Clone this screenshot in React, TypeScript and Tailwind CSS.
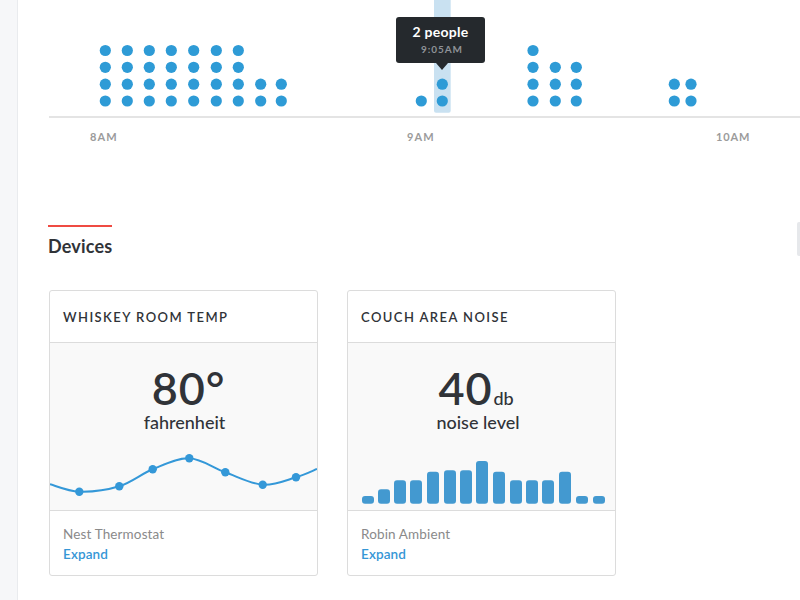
import React from "react";

type P = [number, number];

function smoothPath(pts: P[]): string {
  let d = `M${pts[0][0]},${pts[0][1]}`;
  for (let i = 0; i < pts.length - 1; i++) {
    const p0 = pts[i - 1] || pts[i];
    const p1 = pts[i];
    const p2 = pts[i + 1];
    const p3 = pts[i + 2] || p2;
    const c1: P = [p1[0] + (p2[0] - p0[0]) / 6, p1[1] + (p2[1] - p0[1]) / 6];
    const c2: P = [p2[0] - (p3[0] - p1[0]) / 6, p2[1] - (p3[1] - p1[1]) / 6];
    d += ` C${c1[0]},${c1[1]} ${c2[0]},${c2[1]} ${p2[0]},${p2[1]}`;
  }
  return d;
}

const ROWS = [101, 84.2, 67.3, 50.5];
const COLS: [number, number][] = [
  [57.3, 4], [79.3, 4], [101.3, 4], [123.3, 4], [145.7, 4], [168.3, 4], [190.3, 4], [212.7, 2], [233.3, 2],
  [373.3, 1], [394.3, 2], [485, 4], [507.3, 3], [528.3, 3], [626.3, 2], [643, 2],
];

const FONT = { fontFamily: "Lato, 'Open Sans', sans-serif" };

function DotChart() {
  return (
    <div className="relative ml-[30px] h-[160px] w-[752px]">
      <svg className="absolute left-0 top-0" width={752} height={160}>
        <rect x={386} y={-4} width={16.7} height={116.7} rx={2} fill="#c9e1f1" />
        <rect x={1} y={116} width={751} height={2} fill="#e4e4e4" />
        {COLS.map(([x, n], ci) =>
          ROWS.slice(0, n).map((y, ri) => (
            <circle key={`${ci}-${ri}`} cx={x} cy={y} r={5.6} fill="#2e9bd6" />
          ))
        )}
      </svg>
      <div className="absolute left-[348px] top-[17px] flex h-[46px] w-[89px] flex-col items-center rounded-[3px] bg-[#25292d] pt-[7px]">
        <span className="text-[14px] font-bold leading-[16px] tracking-[0.02em] text-white">2 people</span>
        <span className="mt-[3px] pl-[3px] text-[10px] font-bold leading-[12px] tracking-[0.09em] text-[#8e9297]">9:05AM</span>
        <div className="absolute left-[40px] top-[46px] h-0 w-0 border-l-[6px] border-r-[6px] border-t-[7px] border-l-transparent border-r-transparent border-t-[#25292d]" />
      </div>
      <span className="absolute left-[42px] top-[130px] text-[11px] font-bold leading-[13px] tracking-[0.1em] text-[#9b9b9b]">8AM</span>
      <span className="absolute left-[359px] top-[130px] text-[11px] font-bold leading-[13px] tracking-[0.1em] text-[#9b9b9b]">9AM</span>
      <span className="absolute left-[668px] top-[130px] text-[11px] font-bold leading-[13px] tracking-[0.08em] text-[#9b9b9b]">10AM</span>
    </div>
  );
}

const WAVE: P[] = [
  [0, 34.3], [29.3, 41.7], [69.3, 36.3], [102.7, 19.3], [139.3, 8.3], [175.3, 22.3], [212.7, 34.7], [246, 27.3], [267, 19],
];

function Wave() {
  return (
    <svg width={267} height={60} className="mt-auto block">
      <path d={smoothPath(WAVE)} fill="none" stroke="#3498d8" strokeWidth={2} />
      {WAVE.slice(1, -1).map(([x, y], i) => (
        <circle key={i} cx={x} cy={y} r={4.2} fill="#3498d8" />
      ))}
    </svg>
  );
}

const BARS: [number, number][] = [
  [14, 46], [30, 39.3], [46, 30.3], [62, 30.3], [79, 21.7], [96, 20.3], [112, 20.3], [128, 11],
  [145, 21.7], [162, 30.3], [178, 30.3], [194, 30.3], [211, 21.7], [228, 46], [245, 46],
];

function Bars() {
  return (
    <svg width={267} height={60} className="mt-auto block">
      {BARS.map(([x, top], i) => (
        <rect key={i} x={x} y={top} width={12} height={53.7 - top} rx={3} fill="#4399d0" />
      ))}
    </svg>
  );
}

function Card({
  title,
  value,
  unit,
  label,
  source,
  chart,
  valueClass,
  labelClass,
}: {
  title: string;
  value: React.ReactNode;
  unit?: string;
  label: string;
  source: string;
  chart: React.ReactNode;
  valueClass: string;
  labelClass: string;
}) {
  return (
    <div className="flex w-[269px] flex-col rounded-[3px] border border-[#dcdcdc] bg-white">
      <div className="flex h-[52px] items-center border-b border-[#dcdcdc] px-[13px]">
        <span className="text-[13px] font-semibold leading-[16px] tracking-[0.11em] text-[#303338]">{title}</span>
      </div>
      <div className="flex h-[167px] flex-col items-center bg-[#f9f9f9] pt-[23px]">
        <div className={`flex items-baseline text-[#303338] ${valueClass}`}>
          <span className="text-[45px] font-semibold leading-[44px] tracking-[0.02em]">{value}</span>
          {unit && <span className="ml-[1px] text-[18px] font-medium leading-[20px]">{unit}</span>}
        </div>
        <span className={`mt-[2px] text-[18px] font-medium leading-[20px] text-[#303338] ${labelClass}`}>{label}</span>
        {chart}
      </div>
      <div className="flex flex-col border-t border-[#dcdcdc] px-[13px] pb-[11px] pt-[13px]">
        <span className="text-[13.5px] leading-[20px] tracking-[0.01em] text-[#8a8a8a]">{source}</span>
        <span className="text-[13.5px] font-semibold leading-[20px] tracking-[0.01em] text-[#3596d6]">Expand</span>
      </div>
    </div>
  );
}

export default function App() {
  return (
    <div className="relative flex h-[600px] w-[800px] overflow-hidden bg-white" style={FONT}>
      <div className="h-full w-[18px] shrink-0 border-r border-[#e9ebee] bg-[#f6f7f9]" />
      <div className="flex flex-1 flex-col">
        <DotChart />
        <div className="flex flex-col pl-[30px]">
          <div className="mt-[65px] h-[2px] w-[64px] bg-[#ef4b43]" />
          <h2 className="mt-[8px] text-[18px] font-bold leading-[22px] tracking-[0.01em] text-[#303338]">Devices</h2>
          <div className="mt-[33px] flex gap-[29px] pl-px">
            <Card
              title="WHISKEY ROOM TEMP"
              value="80°"
              label="fahrenheit"
              source="Nest Thermostat"
              chart={<Wave />}
              valueClass="pl-[10px]"
              labelClass="pl-[2px]"
            />
            <Card
              title="COUCH AREA NOISE"
              value="40"
              unit="db"
              label="noise level"
              source="Robin Ambient"
              chart={<Bars />}
              valueClass="pr-[11px]"
              labelClass="pr-[7px]"
            />
          </div>
        </div>
      </div>
      <div className="absolute right-0 top-[222px] h-[34px] w-[3px] rounded-l-[2px] bg-[#e6e8eb]" />
    </div>
  );
}
